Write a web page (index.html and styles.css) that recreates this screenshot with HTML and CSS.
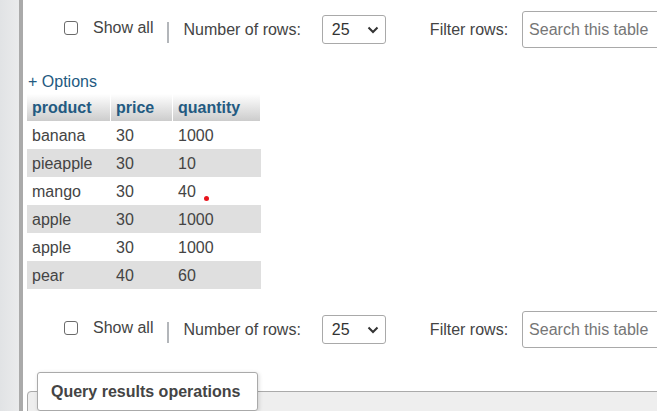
FILE: index.html
```html
<!DOCTYPE html>
<html lang="en">
<head>
<meta charset="utf-8">
<title>Query results</title>
<link rel="stylesheet" href="styles.css">
</head>
<body>
<div class="layout">
  <div class="nav"></div>
  <div class="resizer"></div>
  <main class="main">
    <div class="toolbar toolbar-top">
      <label class="show-all"><input type="checkbox" class="check"><span class="show-all-text">Show all</span></label>
      <span class="sep"></span>
      <span class="label">Number of rows:</span>
      <div class="select"><span>25</span><svg class="chev" width="12" height="8" viewBox="0 0 12 8"><path d="M1.5 1.5 L6 6 L10.5 1.5" fill="none" stroke="#333" stroke-width="2"/></svg></div>
      <span class="label filter-label">Filter rows:</span>
      <input class="search" type="text" placeholder="Search this table">
    </div>
    <a class="options" href="#">+ Options</a>
    <table class="results">
      <thead>
        <tr><th class="c-product">product</th><th class="c-price">price</th><th class="c-qty">quantity</th></tr>
      </thead>
      <tbody>
        <tr class="odd"><td>banana</td><td>30</td><td>1000</td></tr>
        <tr class="even"><td>pieapple</td><td>30</td><td>10</td></tr>
        <tr class="odd"><td>mango</td><td>30</td><td>40<span class="dot"></span></td></tr>
        <tr class="even"><td>apple</td><td>30</td><td>1000</td></tr>
        <tr class="odd"><td>apple</td><td>30</td><td>1000</td></tr>
        <tr class="even"><td>pear</td><td>40</td><td>60</td></tr>
      </tbody>
    </table>
    <div class="toolbar toolbar-bottom">
      <label class="show-all"><input type="checkbox" class="check"><span class="show-all-text">Show all</span></label>
      <span class="sep"></span>
      <span class="label">Number of rows:</span>
      <div class="select"><span>25</span><svg class="chev" width="12" height="8" viewBox="0 0 12 8"><path d="M1.5 1.5 L6 6 L10.5 1.5" fill="none" stroke="#333" stroke-width="2"/></svg></div>
      <span class="label filter-label">Filter rows:</span>
      <input class="search" type="text" placeholder="Search this table">
    </div>
    <fieldset class="ops">
      <legend>Query results operations</legend>
    </fieldset>
  </main>
</div>
</body>
</html>
```
FILE: styles.css
```css
html, body {
  margin: 0;
  height: 411px;
  overflow: hidden;
  background: #fff;
}
body {
  font-family: Arial, "Liberation Sans", sans-serif;
  font-size: 16px;
  color: #444;
}
.layout {
  display: flex;
  height: 411px;
}
.nav {
  width: 19px;
  flex: none;
  background: linear-gradient(to right, #e1e3e5, #eaebec);
}
.resizer {
  width: 4px;
  flex: none;
  background: #aaa;
}
.main {
  flex: 1;
  min-width: 0;
  padding-left: 4px;
  overflow: hidden;
}
.toolbar {
  display: flex;
  align-items: center;
  height: 37px;
  padding-left: 37px;
  white-space: nowrap;
  color: #444;
}
.toolbar > * { flex: none; }
.toolbar-top { margin-top: 11px; }
.toolbar-bottom { margin-top: 22px; }
.show-all {
  display: flex;
  align-items: center;
  margin-bottom: 4px;
}
.check {
  appearance: none;
  -webkit-appearance: none;
  margin: 0;
  width: 14px;
  height: 14px;
  box-sizing: border-box;
  border: 1px solid #6b6b6b;
  border-radius: 3px;
  background: #fff;
}
.show-all-text {
  margin-left: 15px;
  line-height: 18px;
}
.sep {
  width: 2px;
  height: 21px;
  background: #b3b6ba;
  margin: 6px 14px 0 14px;
}
.label { line-height: 18px; }
.select {
  display: flex;
  align-items: center;
  justify-content: space-between;
  box-sizing: border-box;
  width: 64px;
  height: 29px;
  margin-left: 21px;
  padding: 0 6px 0 9px;
  border: 1px solid #a9a9a9;
  border-radius: 3px;
  color: #333;
}
.chev { display: block; }
.filter-label { margin-left: 44px; }
.search {
  box-sizing: border-box;
  width: 200px;
  height: 37px;
  margin: 0 0 0 14px;
  padding: 0 6px;
  border: 1px solid #a9a9a9;
  border-radius: 3px;
  font-family: Arial, "Liberation Sans", sans-serif;
  font-size: 16px;
  color: #444;
}
.search::placeholder { color: #767676; }
.options {
  display: block;
  margin-top: 25px;
  padding-left: 1px;
  line-height: 18px;
  color: #235a81;
  text-decoration: none;
}
.results {
  margin-top: 3px;
  border-collapse: separate;
  border-spacing: 0;
  line-height: 18px;
}
.results th, .results td {
  box-sizing: border-box;
  padding: 0 5px;
  text-align: left;
  vertical-align: middle;
  white-space: nowrap;
}
.results th {
  height: 27px;
  font-weight: bold;
  color: #235a81;
  background: linear-gradient(#fff, #ccc);
  border-right: 1px solid #fff;
}
.c-product { width: 84px; }
.c-price { width: 62px; }
.c-qty { width: 88px; }
.results td { height: 28px; padding-top: 1px; color: #444; }
.odd td { background: #fff; }
.even td { background: #dfdfdf; }
.dot {
  display: inline-block;
  width: 5px;
  height: 5px;
  border-radius: 50%;
  background: #e8141c;
  margin-left: 8px;
  vertical-align: -4px;
}
.ops {
  margin: 24px -20px 0 0;
  padding: 0 0 0 9px;
  min-width: 0;
  height: 80px;
  border: 1px solid #aaa;
  border-radius: 4px 0 0 0;
  background: #eee;
}
.ops legend {
  padding: 10px 17px 9px 13px;
  border: 1px solid #aaa;
  border-radius: 3px;
  background: #fff;
  font-weight: bold;
  line-height: 18px;
  color: #444;
  box-shadow: 1px 1px 4px rgba(0,0,0,0.15);
}
```
